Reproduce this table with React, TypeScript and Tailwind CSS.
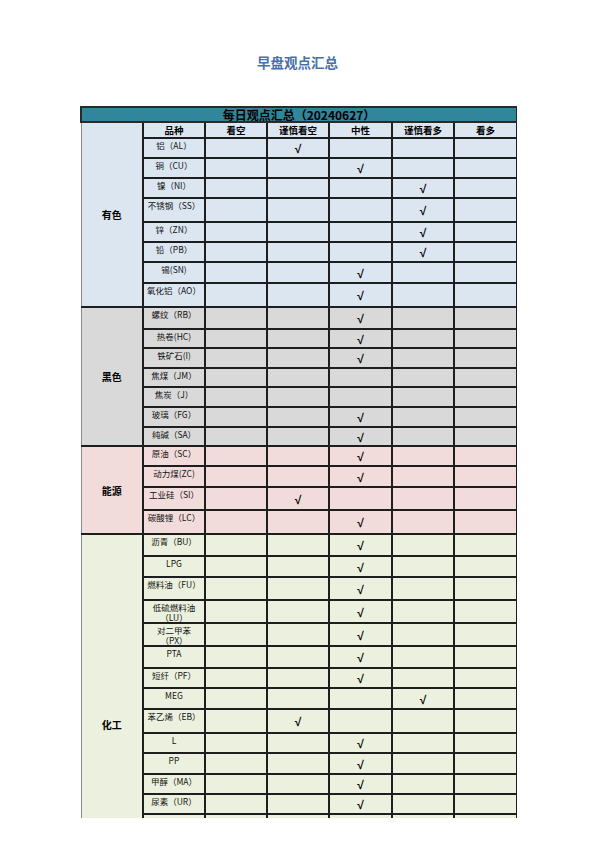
// ─── 早盘观点汇总 ───────────────────────────────────────────────

type Row = { label: React.ReactNode; h: string; pick: number | null };

type Group = { name: string; bg: string; rows: Row[] };

const cols = ['看空', '谨慎看空', '中性', '谨慎看多', '看多'];

const groups: Group[] = [
  {
    name: '有色',
    bg: 'bg-[#dce6f1]',
    rows: [
      { label: '铝（AL）', h: 'h-[20px]', pick: 1 },
      { label: '铜（CU）', h: 'h-[20px]', pick: 2 },
      { label: '镍（NI）', h: 'h-[20px]', pick: 3 },
      { label: '不锈钢（SS）', h: 'h-[24px]', pick: 3 },
      { label: '锌（ZN）', h: 'h-[20px]', pick: 3 },
      { label: '铅（PB）', h: 'h-[20px]', pick: 3 },
      { label: '锡(SN)', h: 'h-[21px]', pick: 2 },
      { label: '氧化铝（AO）', h: 'h-[24px]', pick: 2 },
    ],
  },
  {
    name: '黑色',
    bg: 'bg-[#d9d9d9]',
    rows: [
      { label: '螺纹（RB）', h: 'h-[22px]', pick: 2 },
      { label: '热卷(HC)', h: 'h-[19px]', pick: 2 },
      { label: '铁矿石(I)', h: 'h-[20px]', pick: 2 },
      { label: '焦煤（JM）', h: 'h-[19px]', pick: null },
      { label: '焦炭（J）', h: 'h-[20px]', pick: null },
      { label: '玻璃（FG）', h: 'h-[20px]', pick: 2 },
      { label: '纯碱（SA）', h: 'h-[19px]', pick: 2 },
    ],
  },
  {
    name: '能源',
    bg: 'bg-[#f2dcdb]',
    rows: [
      { label: '原油（SC）', h: 'h-[20px]', pick: 2 },
      { label: '动力煤(ZC)', h: 'h-[21px]', pick: 2 },
      { label: '工业硅（SI）', h: 'h-[23px]', pick: 1 },
      { label: '碳酸锂（LC）', h: 'h-[24px]', pick: 2 },
    ],
  },
  {
    name: '化工',
    bg: 'bg-[#ebf1de]',
    rows: [
      { label: '沥青（BU）', h: 'h-[22px]', pick: 2 },
      { label: 'LPG', h: 'h-[21px]', pick: 2 },
      { label: '燃料油（FU）', h: 'h-[23px]', pick: 2 },
      { label: <>低硫燃料油<br />（LU）</>, h: 'h-[23px]', pick: 2 },
      { label: <>对二甲苯<br />（PX）</>, h: 'h-[23px]', pick: 2 },
      { label: 'PTA', h: 'h-[22px]', pick: 2 },
      { label: '短纤（PF）', h: 'h-[20px]', pick: 2 },
      { label: 'MEG', h: 'h-[21px]', pick: 3 },
      { label: '苯乙烯（EB）', h: 'h-[24px]', pick: 1 },
      { label: 'L', h: 'h-[20px]', pick: 2 },
      { label: 'PP', h: 'h-[21px]', pick: 2 },
      { label: '甲醇（MA）', h: 'h-[20px]', pick: 2 },
      { label: '尿素（UR）', h: 'h-[20px]', pick: 2 },
      // page is cut here; the rest of the group only keeps the spanned label centred
      { label: 'PVC', h: 'h-[20px]', pick: 2 },
      { label: '', h: 'h-[20px]', pick: null },
      { label: '', h: 'h-[20px]', pick: null },
      { label: '', h: 'h-[20px]', pick: null },
      { label: '', h: 'h-[20px]', pick: null },
    ],
  },
];

const cell = 'border-2 border-[#1e1e1e]';

export default function App() {
  return (
    <div className="w-[595px] h-[842px] bg-white font-['Noto_Sans_CJK_SC',sans-serif] text-black">
      <h1 className="pt-[52px] text-center text-[13.5px] leading-[20px] font-bold text-[#4a6fa8]">
        早盘观点汇总
      </h1>

      <div className="ml-[80px] mt-[34px] w-[437px] h-[712px] overflow-hidden">
        <table className="w-[436px] table-fixed border-collapse">
          <colgroup>
            <col className="w-[62px]" />
            <col className="w-[62px]" />
            <col className="w-[62px]" />
            <col className="w-[62px]" />
            <col className="w-[63px]" />
            <col className="w-[62px]" />
            <col className="w-[63px]" />
          </colgroup>
          <tbody>
            <tr className="h-[15px]">
              <td
                colSpan={7}
                className="border-2 border-[#2a2a2a] bg-[#31869b] p-0 text-center text-[12px] leading-[12px] font-bold"
              >
                每日观点汇总（20240627）
              </td>
            </tr>

            {groups.map((g, gi) => (
              <>
                {gi === 0 && (
                  <tr key="head" className="h-[16px]">
                    <td
                      rowSpan={g.rows.length + 1}
                      className={`${cell} border-l border-l-[#8c8c8c] ${g.bg} p-0 text-center align-middle text-[10px] font-bold`}
                    >
                      {g.name}
                    </td>
                    {['品种', ...cols].map((c) => (
                      <td
                        key={c}
                        className={`${cell} bg-[#dce6f1] p-0 text-center text-[9.5px] leading-[11px] font-bold`}
                      >
                        {c}
                      </td>
                    ))}
                  </tr>
                )}
                {g.rows.map((r, ri) => (
                  <tr key={`${g.name}-${ri}`} className={r.h}>
                    {gi > 0 && ri === 0 && (
                      <td
                        rowSpan={g.rows.length}
                        className={`${cell} border-l border-l-[#8c8c8c] ${g.bg} p-0 text-center align-middle text-[10px] font-bold`}
                      >
                        {g.name}
                      </td>
                    )}
                    <td
                      className={`${cell} ${g.bg} whitespace-nowrap px-0 pt-[1px] text-center align-top text-[8.5px] leading-[10px] text-[#111]`}
                    >
                      {r.label}
                    </td>
                    {cols.map((c, ci) => (
                      <td
                        key={c}
                        className={`${cell} ${g.bg} p-0 pt-[2px] text-center align-middle font-['Liberation_Sans',sans-serif] text-[12px] leading-[12px] font-bold`}
                      >
                        {r.pick === ci ? '√' : ''}
                      </td>
                    ))}
                  </tr>
                ))}
              </>
            ))}
          </tbody>
        </table>
      </div>
    </div>
  );
}
